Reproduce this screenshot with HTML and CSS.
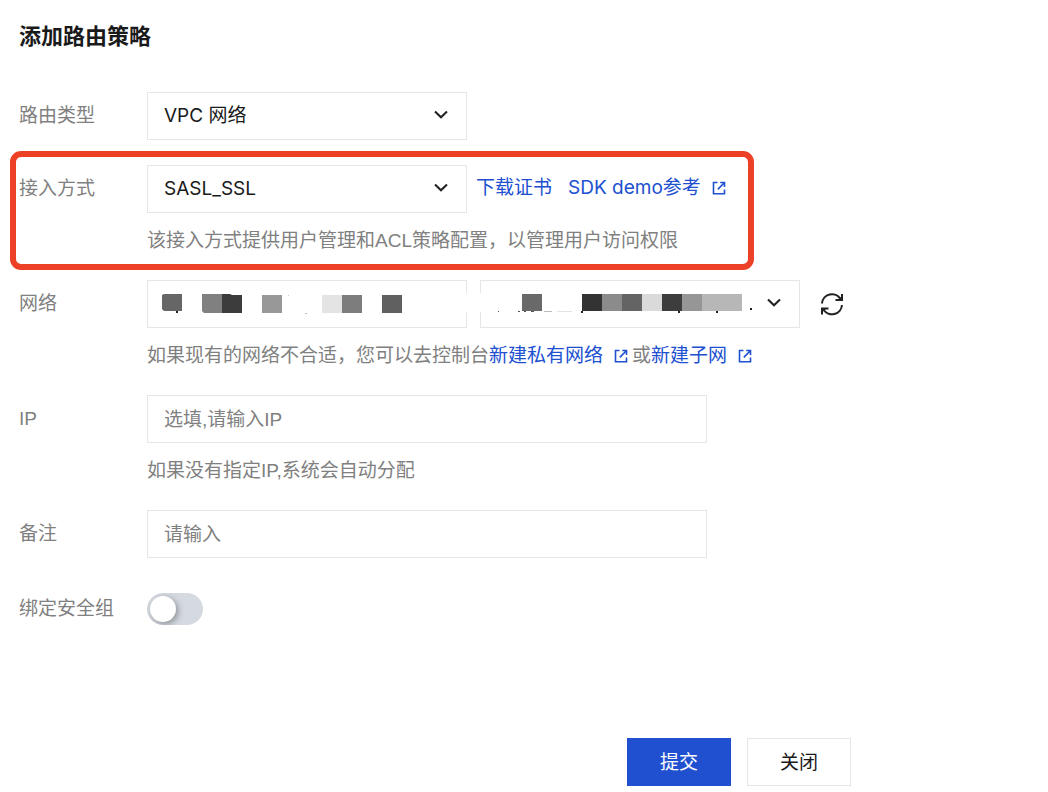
FILE: index.html
```html
<!DOCTYPE html>
<html lang="zh-CN">
<head>
    <meta charset="UTF-8">
    <meta name="viewport" content="width=device-width, initial-scale=1.0">
    <title>添加路由策略</title>
    <link rel="stylesheet" href="styles.css">
</head>
<body>

    <!-- shared icons -->
    <svg class="sprite" aria-hidden="true">
        <symbol id="icon-arrow" viewBox="0 0 14 10">
            <path d="M1 1.5 L7 7.3 L13 1.5" fill="none" stroke="currentColor" stroke-width="2.1"/>
        </symbol>
        <symbol id="icon-external" viewBox="0 0 14 14">
            <path d="M5.5 1.5 H1.5 V12.8 H12.5 V8.5" fill="none" stroke="currentColor" stroke-width="1.6"/>
            <path d="M8.2 1.5 H12.5 V6 M12.3 1.7 L5.8 8.4" fill="none" stroke="currentColor" stroke-width="1.6"/>
        </symbol>
    </svg>

    <form class="route-form">
        <h1>添加路由策略</h1>

        <div class="row">
            <label class="row-label" for="routeType">路由类型</label>
            <div class="row-body">
                <div class="line">
                    <div class="select">
                        <select id="routeType"><option>VPC 网络</option></select>
                        <svg class="arrow"><use href="#icon-arrow"/></svg>
                    </div>
                </div>
            </div>
        </div>

        <div class="row highlight">
            <label class="row-label" for="accessType">接入方式</label>
            <div class="row-body">
                <div class="line">
                    <div class="select">
                        <select id="accessType"><option>SASL_SSL</option></select>
                        <svg class="arrow"><use href="#icon-arrow"/></svg>
                    </div>
                    <div class="links">
                        <a href="#">下载证书</a>
                        <a href="#">SDK demo参考<svg class="external"><use href="#icon-external"/></svg></a>
                    </div>
                </div>
                <p class="help">该接入方式提供用户管理和ACL策略配置，以管理用户访问权限</p>
            </div>
        </div>

        <div class="row">
            <label class="row-label" for="vpc">网络</label>
            <div class="row-body">
                <div class="line network">
                    <div class="select">
                        <select id="vpc"><option></option></select>
                        <svg class="mosaic" viewBox="0 0 320 48">
                            <rect x="316" y="13" width="4" height="19" fill="#fff"/>
                            <path d="M17 14 H35 V31 H17 L15 29 V15 Z" fill="#666"/>
                            <path d="M29 31 H31 V33 H29 Z" fill="#222"/>
                            <path d="M55 14 H75 V33 H57 L55 31 Z" fill="#808080"/>
                            <path d="M75 14 H83 L85 15 H95 V33 H75 Z" fill="#3c3c3c"/>
                            <rect x="115" y="15" width="20" height="18" fill="#989898"/>
                            <rect x="175" y="15" width="20" height="18" fill="#e4e4e4"/>
                            <rect x="195" y="15" width="20" height="18" fill="#7d7d7d"/>
                            <rect x="235" y="15" width="20" height="18" fill="#606060"/>
                            <rect x="141" y="15" width="1" height="1" fill="#ccc"/>
                            <rect x="158" y="33" width="2" height="1" fill="#bbb"/>
                        </svg>
                    </div>
                    <div class="select">
                        <select id="subnet" aria-label="子网"><option></option></select>
                        <svg class="mosaic" viewBox="0 0 320 48">
                            <rect x="0" y="13" width="4" height="19" fill="#fff"/>
                            <rect x="42" y="14" width="20" height="17" fill="#696969"/>
                            <rect x="102" y="14" width="20" height="17" fill="#333"/>
                            <rect x="122" y="14" width="20" height="17" fill="#8b8b8b"/>
                            <rect x="142" y="14" width="20" height="17" fill="#646464"/>
                            <rect x="162" y="14" width="20" height="17" fill="#dadada"/>
                            <rect x="182" y="14" width="20" height="17" fill="#3d3d3d"/>
                            <rect x="202" y="14" width="20" height="17" fill="#969696"/>
                            <rect x="222" y="14" width="40" height="17" fill="#b7b7b7"/>
                            <path d="M18 31.5 h1 M38 31.5 h2 M44 31.5 h2 M51 31.5 h3" stroke="#555"/>
                            <path d="M64 31.5 h8" stroke="#bbb"/>
                            <path d="M77 31.5 h15" stroke="#e4e4e4"/>
                            <path d="M101 32 h2 M198 32 h2 M236 32 h2 M270 29 h2" stroke="#222" stroke-width="2"/>
                        </svg>
                        <svg class="arrow"><use href="#icon-arrow"/></svg>
                    </div>
                    <button type="button" class="refresh" aria-label="刷新">
                        <svg viewBox="0 0 24 24">
                            <path d="M2 11.5 A10 10 0 0 1 20.5 7 M22 13 A10 10 0 0 1 3.5 17.5" fill="none" stroke="currentColor" stroke-width="2"/>
                            <path d="M22 2 V8 H15.5 M2 22.5 V16.5 H8.5" fill="none" stroke="currentColor" stroke-width="2"/>
                            <path d="M22.5 3.5 V8 H17.5 Z M1.5 21 V16.5 H6.5 Z" fill="currentColor"/>
                        </svg>
                    </button>
                </div>
                <p class="help">如果现有的网络不合适，您可以去控制台<a href="#">新建私有网络<svg class="external"><use href="#icon-external"/></svg></a><span class="or">或</span><a href="#">新建子网<svg class="external"><use href="#icon-external"/></svg></a></p>
            </div>
        </div>

        <div class="row">
            <label class="row-label" for="ip">IP</label>
            <div class="row-body">
                <input type="text" class="text" id="ip" placeholder="选填,请输入IP">
                <p class="help">如果没有指定IP,系统会自动分配</p>
            </div>
        </div>

        <div class="row">
            <label class="row-label" for="remark">备注</label>
            <div class="row-body">
                <input type="text" class="text" id="remark" placeholder="请输入">
            </div>
        </div>

        <div class="row switch-row">
            <label class="row-label" for="securityGroup">绑定安全组</label>
            <input type="checkbox" class="switch" id="securityGroup">
        </div>

        <div class="footer">
            <button type="submit" class="btn primary">提交</button>
            <button type="button" class="btn">关闭</button>
        </div>
    </form>

</body>
</html>
```
FILE: styles.css
```css
* {
    box-sizing: border-box;
}

body {
    margin: 0;
    background-color: #fff;
    color: #808080;
    font-family: "Liberation Sans", "Noto Sans CJK SC", sans-serif;
    font-size: 19px;
    line-height: 28px;
}

.sprite {
    position: absolute;
    width: 0;
    height: 0;
}

.route-form {
    display: flex;
    flex-direction: column;
    gap: 25px;
    max-width: 851px;
    padding: 20px 0 6px 19px;
}

h1 {
    margin: 0 0 13px;
    font-size: 22px;
    line-height: 34px;
    color: #1a1a1a;
}

.row {
    display: flex;
    align-items: flex-start;
}

.row-label {
    flex: none;
    width: 128px;
    line-height: 48px;
}

.row-body {
    flex: 1;
    min-width: 0;
}

.line {
    display: flex;
    align-items: center;
    gap: 9px;
}

.line.network {
    gap: 13px;
}

/* red frame around the access row */
.highlight {
    position: relative;
    align-self: flex-start;
}

.highlight::after {
    content: "";
    position: absolute;
    inset: -14px -28px -15px -9px;
    border: 6px solid #ec4027;
    border-radius: 11px;
    pointer-events: none;
}

.select {
    position: relative;
    width: 320px;
}

select,
.text {
    display: block;
    width: 100%;
    height: 48px;
    padding: 0 16px;
    border: 1px solid #e6e6ea;
    border-radius: 0;
    background: #fff;
    color: #1a1a1a;
    font-size: 19px;
    appearance: none;
}

select {
    padding-bottom: 2px;
    font-family: Inter, "Noto Sans CJK SC", sans-serif;
}

.text {
    max-width: 560px;
    padding-top: 2px;
    font-family: inherit;
}

.text::placeholder {
    color: #808080;
}

.arrow {
    position: absolute;
    top: 18px;
    right: 19px;
    width: 14px;
    height: 10px;
    color: #222;
    pointer-events: none;
}

.mosaic {
    position: absolute;
    top: 0;
    left: 0;
    width: 320px;
    height: 48px;
    pointer-events: none;
}

a {
    color: #2050d0;
    text-decoration: none;
}

.links {
    display: flex;
    gap: 16px;
    padding-bottom: 2px;
    font-family: Inter, "Noto Sans CJK SC", sans-serif;
    white-space: nowrap;
}

.external {
    width: 14px;
    height: 14px;
    margin-left: 11px;
    vertical-align: -1px;
}

.help {
    margin: 14px 0 0;
}

.or {
    margin-left: 4px;
}

.refresh {
    width: 24px;
    height: 24px;
    margin-left: 7px;
    padding: 0;
    border: 0;
    background: none;
    color: #222;
}

.refresh svg {
    display: block;
}

.switch-row {
    align-items: center;
    min-height: 52px;
}

.switch {
    width: 56px;
    height: 32px;
    margin: 0;
    padding: 3px;
    border-radius: 16px;
    background: #d5dae1;
    overflow: hidden;
    appearance: none;
}

.switch::before {
    content: "";
    display: block;
    width: 26px;
    height: 26px;
    border-radius: 50%;
    background: #fff;
    box-shadow: 2px 2px 6px rgba(0, 0, 0, 0.35);
}

.switch:checked {
    background: #2050d0;
}

.switch:checked::before {
    margin-left: 24px;
}

.footer {
    display: flex;
    justify-content: flex-end;
    gap: 16px;
    margin-top: 78px;
}

.btn {
    width: 104px;
    height: 48px;
    padding: 0 0 3px;
    border: 1px solid #e6e6ea;
    background: #fff;
    color: #1a1a1a;
    font-family: inherit;
    font-size: 19px;
}

.btn.primary {
    border-color: #2050d0;
    background: #2050d0;
    color: #fff;
}
```
